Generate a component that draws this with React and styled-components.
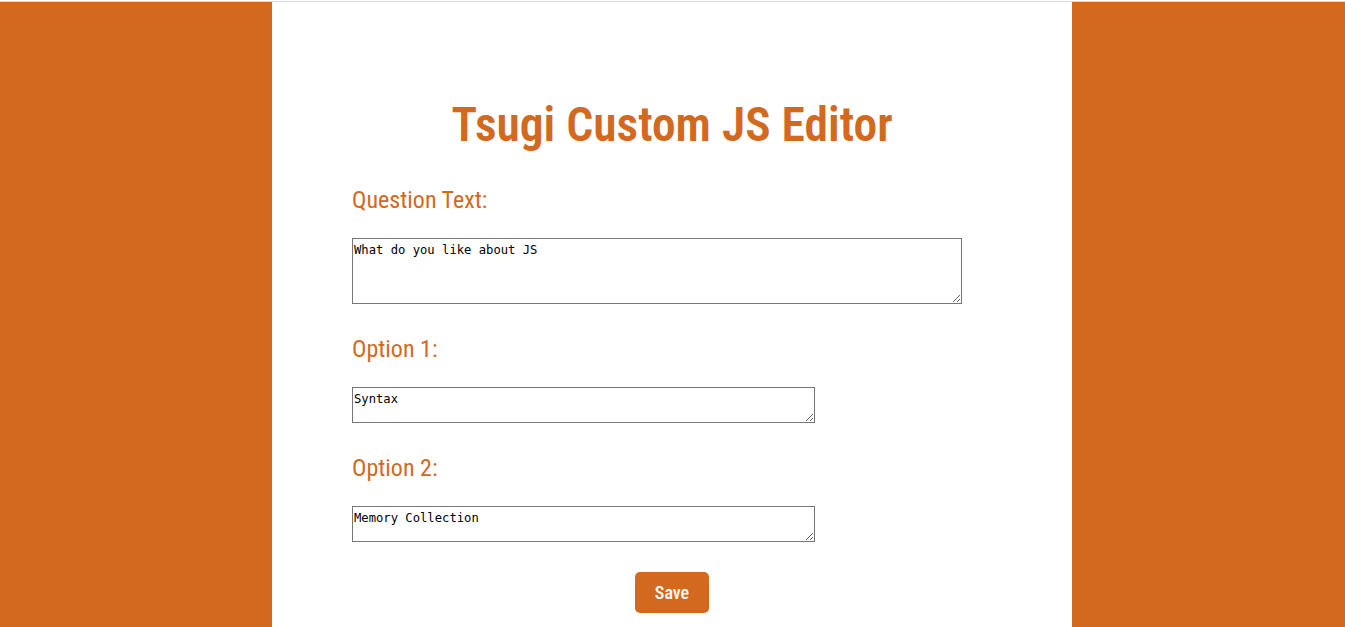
import React from "react";
import styled, { createGlobalStyle } from "styled-components";

const accent = "#d2691e";

const GlobalStyle = createGlobalStyle`
  html, body {
    margin: 0;
    padding: 0;
  }
  body {
    font-family: "Roboto Condensed", Roboto, "Liberation Sans", sans-serif;
    font-stretch: 75%;
  }
`;

const Page = styled.div`
  min-height: 100vh;
  display: flex;
  flex-direction: column;
`;

const TopRule = styled.div`
  height: 1px;
  background: #fff;
  border-bottom: 1px solid #dadada;
`;

const Backdrop = styled.div`
  flex: 1;
  display: flex;
  justify-content: center;
  padding-right: 1px;
  background: ${accent};
`;

const Panel = styled.main`
  width: 800px;
  background: #fff;
  padding: 95px 80px 14px;
  box-sizing: border-box;
  display: flex;
  flex-direction: column;
`;

const Title = styled.h1`
  margin: 0 0 33px;
  font-size: 47.5px;
  line-height: 56px;
  font-weight: 600;
  color: ${accent};
  text-align: center;
`;

const Field = styled.div`
  display: flex;
  flex-direction: column;
  align-items: flex-start;
  gap: 24px;
  margin-bottom: 31px;
`;

const Label = styled.label`
  font-size: 24px;
  line-height: 28px;
  font-weight: 400;
  color: ${accent};
`;

const Input = styled.textarea`
  box-sizing: border-box;
  width: ${({ $wide }) => ($wide ? "610px" : "463px")};
  height: ${({ $tall }) => ($tall ? "66px" : "36px")};
  margin: 0;
  padding: 4px 1px 2px;
  border: 1px solid #767676;
  font-family: "DejaVu Sans Mono", "Liberation Mono", monospace;
  font-stretch: normal;
  font-size: 12.2px;
  line-height: 15px;
  color: #000;
`;

const SaveButton = styled.button`
  align-self: center;
  margin-top: -1px;
  width: 74px;
  height: 41px;
  border: none;
  border-radius: 5px;
  background: ${accent};
  color: #fff;
  font-family: inherit;
  font-stretch: 75%;
  font-size: 18px;
  font-weight: 500;
  cursor: pointer;
`;

const fields = [
  { id: "question", label: "Question Text:", value: "What do you like about JS", wide: true, tall: true },
  { id: "opt1", label: "Option 1:", value: "Syntax" },
  { id: "opt2", label: "Option 2:", value: "Memory Collection" },
];

function App() {
  return (
    <Page>
      <GlobalStyle />
      <TopRule />
      <Backdrop>
        <Panel>
          <Title>Tsugi Custom JS Editor</Title>
          {fields.map((f) => (
            <Field key={f.id}>
              <Label htmlFor={f.id}>{f.label}</Label>
              <Input id={f.id} defaultValue={f.value} $wide={f.wide} $tall={f.tall} />
            </Field>
          ))}
          <SaveButton type="button">Save</SaveButton>
        </Panel>
      </Backdrop>
    </Page>
  );
}

export default App;
